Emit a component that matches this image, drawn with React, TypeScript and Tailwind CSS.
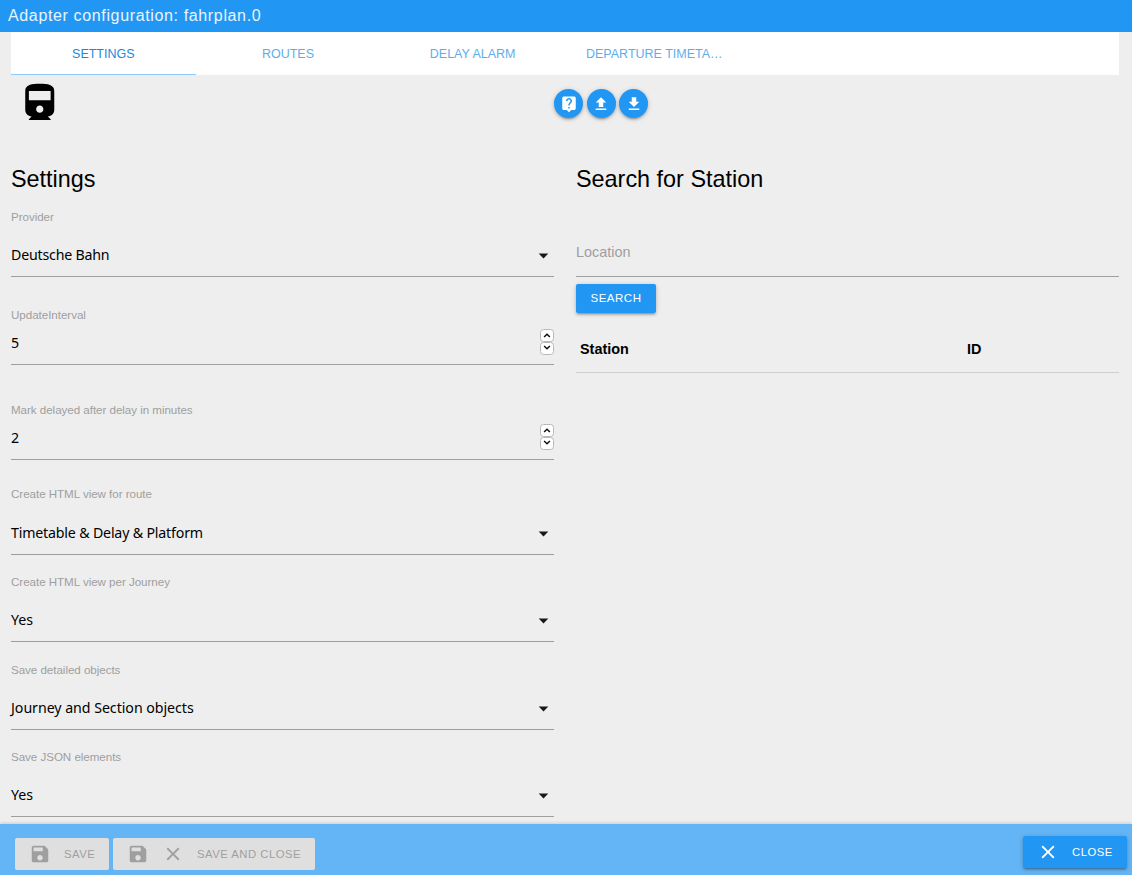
import React from "react";

type IconProps = { d: string; className: string };

const Icon = ({ d, className }: IconProps) => (
  <svg viewBox="0 0 24 24" fill="currentColor" className={"shrink-0 " + className}>
    <path d={d} />
  </svg>
);

const TRAIN =
  "M4 15.5C4 17.43 5.57 19 7.5 19L6 20.5v.5h12v-.5L16.5 19c1.93 0 3.5-1.57 3.5-3.5V5c0-3.5-3.58-4-8-4s-8 .5-8 4v10.5zm8 1.5c-1.1 0-2-.9-2-2s.9-2 2-2 2 .9 2 2-.9 2-2 2zm6-7H6V5h12v5z";
const HELP =
  "M19 2H5c-1.11 0-2 .9-2 2v14c0 1.1.89 2 2 2h4l3 3 3-3h4c1.1 0 2-.9 2-2V4c0-1.1-.9-2-2-2zm-6 16h-2v-2h2v2zm2.07-7.75l-.9.92C13.45 11.9 13 12.5 13 14h-2v-.5c0-1.1.45-2.1 1.17-2.83l1.24-1.26c.37-.36.59-.86.59-1.41 0-1.1-.9-2-2-2s-2 .9-2 2H8c0-2.21 1.79-4 4-4s4 1.79 4 4c0 .88-.36 1.68-.93 2.25z";
const UPLOAD = "M9 16h6v-6h4l-7-7-7 7h4zm-4 2h14v2H5z";
const DOWNLOAD = "M19 9h-4V3H9v6H5l7 7 7-7zM5 18v2h14v-2H5z";
const SAVE =
  "M17 3H5c-1.11 0-2 .9-2 2v14c0 1.1.89 2 2 2h14c1.1 0 2-.9 2-2V7l-4-4zm-5 16c-1.66 0-3-1.34-3-3s1.34-3 3-3 3 1.34 3 3-1.34 3-3 3zm3-10H5V5h10v4z";
const CLOSE =
  "M19 6.41L17.59 5 12 10.59 6.41 5 5 6.41 10.59 12 5 17.59 6.41 19 12 13.41 17.59 19 19 17.59 13.41 12z";
const CARET = "M7 10l5 5 5-5z";

const SHADOW = "shadow-[0_2px_2px_0_rgba(0,0,0,0.14),0_3px_1px_-2px_rgba(0,0,0,0.12),0_1px_5px_0_rgba(0,0,0,0.2)]";

const tabs = [
  { label: "SETTINGS", active: true },
  { label: "ROUTES", active: false },
  { label: "DELAY ALARM", active: false },
  { label: "DEPARTURE TIMETABLE", active: false },
];

const fields = [
  { label: "Provider", value: "Deutsche Bahn", kind: "select", box: "h-[68px]", text: "tracking-[-0.2px]" },
  { label: "UpdateInterval", value: "5", kind: "number", box: "mt-[30px] h-[58px]", text: "" },
  { label: "Mark delayed after delay in minutes", value: "2", kind: "number", box: "mt-[37px] h-[58px]", text: "" },
  { label: "Create HTML view for route", value: "Timetable & Delay & Platform", kind: "select", box: "mt-[26px] h-[69px]", text: "tracking-[-0.18px]" },
  { label: "Create HTML view per Journey", value: "Yes", kind: "select", box: "mt-[19px] h-[68px]", text: "" },
  { label: "Save detailed objects", value: "Journey and Section objects", kind: "select", box: "mt-5 h-[68px]", text: "tracking-[-0.04px]" },
  { label: "Save JSON elements", value: "Yes", kind: "select", box: "mt-[19px] h-[68px]", text: "" },
];

const Spinner = () => (
  <div className="mb-[9px] flex flex-col self-end">
    {["M3.6 8L6.5 5.2L9.4 8", "M3.6 4L6.5 6.8L9.4 4"].map((d) => (
      <svg key={d} viewBox="0 0 14 13" className="h-[13px] w-[14px]" fill="none">
        <rect x="0.5" y="0.5" width="13" height="12" rx="3" fill="#fff" stroke="#b8b8b8" />
        <path d={d} transform="translate(0.5 0)" stroke="#111" strokeWidth="1.5" />
      </svg>
    ))}
  </div>
);

const Field = ({ label, value, kind, box, text }: (typeof fields)[number]) => (
  <div className={"flex flex-col justify-between border-b border-[#9e9e9e] " + box}>
    <div className="h-4 text-[11.6px] leading-4 tracking-[-0.04px] text-[#9e9e9e]">{label}</div>
    <div className="flex h-[33px] justify-between">
      <span className={"font-['Noto_Sans',sans-serif] text-[14.2px] leading-6 text-black " + text}>{value}</span>
      {kind === "select" ? <Icon d={CARET} className="mt-[1px] mr-[-1px] h-[23px] w-[23px] text-black/90" /> : <Spinner />}
    </div>
  </div>
);

export default function App() {
  return (
    <div className="flex h-[875px] w-full flex-col overflow-hidden bg-[#eeeeee] font-['Liberation_Sans',sans-serif] text-black">
      <header className="h-8 shrink-0 bg-[#2196f3] px-2 text-[16px] leading-8 tracking-[0.64px] text-white/90">
        Adapter configuration: fahrplan.0
      </header>

      <div className="flex min-h-0 flex-1 flex-col overflow-hidden px-[11px] pr-[13px]">
        <nav className="flex h-[43px] shrink-0 bg-white">
          {tabs.map((t) => (
            <div
              key={t.label}
              className={
                "w-1/6 overflow-hidden px-[21px] text-center text-[12.5px] leading-[44px] text-ellipsis whitespace-nowrap " +
                (t.active ? "border-b border-[#90caf9] text-[#1a88e0]" : "text-[#5caeea]")
              }
            >
              {t.label}
            </div>
          ))}
        </nav>

        <div className="flex h-[84px] shrink-0">
          <div className="w-[543px] pt-[7px] pl-[7px]">
            <Icon d={TRAIN} className="h-[43.5px] w-[43.5px]" />
          </div>
          <div className="flex gap-[3.5px] pt-[14px]">
            {[HELP, UPLOAD, DOWNLOAD].map((d) => (
              <button key={d} className={"flex h-[29px] w-[29px] items-center justify-center rounded-full bg-[#2196f3] text-white " + SHADOW}>
                <Icon d={d} className="h-[18px] w-[18px]" />
              </button>
            ))}
          </div>
        </div>

        <div className="flex gap-[22px]">
          <section className="w-[543px]">
            <h2 className="h-[50px] text-[23.4px] leading-10">Settings</h2>
            {fields.map((f) => (
              <Field key={f.label} {...f} />
            ))}
          </section>

          <section className="w-[543px]">
            <h2 className="h-[50px] text-[23.4px] leading-10">Search for Station</h2>
            <div className="h-[68px] border-b border-[#9e9e9e] pt-[31px] text-[14.4px] leading-6 text-[#9e9e9e]">Location</div>
            <button className={"mt-[7px] block h-[29px] w-20 rounded-[2px] bg-[#2196f3] text-center text-[11.5px] tracking-[0.5px] text-white " + SHADOW}>
              SEARCH
            </button>
            <div className="mt-3 flex h-12 border-b border-[#cfcfcf] pl-1 text-[14.4px] leading-[48px] font-bold">
              <div className="w-[387px]">Station</div>
              <div>ID</div>
            </div>
          </section>
        </div>
      </div>

      <footer className="flex h-[51px] shrink-0 justify-between bg-[#64b5f6] pr-[5px] pl-[15px] text-[11.3px] tracking-[0.5px] shadow-[0_-1px_3px_rgba(0,0,0,0.14)]">
        <div className="flex gap-1 pt-[14px] text-[#9f9f9f]">
          <div className="flex h-8 w-[94px] items-center rounded-[2px] bg-[#dfdfdf] pl-[14px]">
            <Icon d={SAVE} className="h-[22px] w-[22px]" />
            <span className="ml-[13px]">SAVE</span>
          </div>
          <div className="flex h-8 w-[202px] items-center rounded-[2px] bg-[#dfdfdf] pl-[14px]">
            <Icon d={SAVE} className="h-[22px] w-[22px]" />
            <Icon d={CLOSE} className="ml-[13px] h-[22px] w-[22px]" />
            <span className="ml-[13px] whitespace-nowrap">SAVE AND CLOSE</span>
          </div>
        </div>
        <div className="pt-3">
          <button className={"flex h-8 w-[104px] items-center rounded-[2px] bg-[#2196f3] pl-[14px] text-white " + SHADOW}>
            <Icon d={CLOSE} className="h-[22px] w-[22px]" />
            <span className="ml-[13px]">CLOSE</span>
          </button>
        </div>
      </footer>
    </div>
  );
}
